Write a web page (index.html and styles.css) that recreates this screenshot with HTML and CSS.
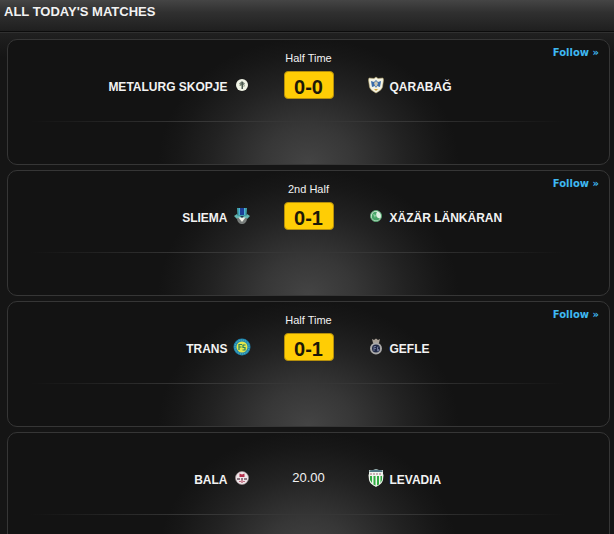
FILE: index.html
```html
<!DOCTYPE html>
<html lang="en">
<head>
    <meta charset="utf-8">
    <title>All Today's Matches</title>
    <link rel="stylesheet" href="styles.css">
</head>
<body>

<div class="header">
    <h1>ALL TODAY'S MATCHES</h1>
</div>

<div class="matches">

    <div class="match">
        <div class="top">
            <span class="status">Half Time</span>
            <a class="follow" href="#">Follow »</a>
        </div>
        <div class="teams">
            <div class="home">
                <span class="name">METALURG SKOPJE</span>
                <svg class="crest" viewBox="0 0 18 18">
                    <circle cx="9" cy="9" r="6" fill="#f1f4e6"/>
                    <path d="M9 5l3 2.500-1.500 2H7.500L6 7.500z" fill="#7b877a"/>
                    <path d="M8.500 6h1.500v7H8.500z" fill="#4c5a50"/>
                    <path d="M6.500 9.500h2M10.500 10.500l1.500-1" stroke="#93a183"/>
                </svg>
            </div>
            <span class="score">0-0</span>
            <div class="away">
                <svg class="crest" viewBox="0 0 18 18">
                    <path d="M9 1l2 1.500 5-.5.500 2-1 7c-.8 3-3.500 4-6.500 6-3-2-5.700-3-6.500-6l-1-7L2 2l5 .5z" fill="#f4f3e4" stroke="#b3a46c" stroke-width=".6"/>
                    <path d="M4 5l3 1 2-2 2 2 3-1-1 6-3-1-1 2-1-2-3 1z" fill="#3a6cab"/>
                    <path d="M7 7l2-2 2 2-1 3H8z" fill="#c9c5b0"/>
                    <path d="M7 13h4l-2 2z" fill="#d5a637"/>
                </svg>
                <span class="name">QARABAĞ</span>
            </div>
        </div>
        <div class="line"></div>
    </div>

    <div class="match">
        <div class="top">
            <span class="status">2nd Half</span>
            <a class="follow" href="#">Follow »</a>
        </div>
        <div class="teams">
            <div class="home">
                <span class="name">SLIEMA</span>
                <svg class="crest" viewBox="0 0 18 18">
                    <path d="M4 1h10l-.5 8h-9z" fill="#3f9fa6"/>
                    <path d="M6 1h6v7H6z" fill="#4fb0dc"/>
                    <path d="M7 1h4v7H7z" fill="#1d3f97"/>
                    <path d="M1 9l3-2 1 2h8l1-2 3 2-3 3H4z" fill="#64b7b2"/>
                    <path d="M4 11h10c0 4-2.500 6-5 6s-5-2-5-6z" fill="#777c7a"/>
                    <path d="M5.500 10.500h7L9 15z" fill="#f0f2e8"/>
                    <path d="M7 9h4l-2 2z" fill="#26324a"/>
                </svg>
            </div>
            <span class="score">0-1</span>
            <div class="away">
                <svg class="crest" viewBox="0 0 18 18">
                    <circle cx="9" cy="9" r="5.500" fill="#dff1e2" stroke="#4fa36b"/>
                    <path d="M10 5a4.300 4.300 0 1 0 3 6c-3 1-5-3-3-6z" fill="#46a567"/>
                    <path d="M6 7l3 1-1 3z" fill="#8bd3a1"/>
                </svg>
                <span class="name">XÄZÄR LÄNKÄRAN</span>
            </div>
        </div>
        <div class="line"></div>
    </div>

    <div class="match">
        <div class="top">
            <span class="status">Half Time</span>
            <a class="follow" href="#">Follow »</a>
        </div>
        <div class="teams">
            <div class="home">
                <span class="name">TRANS</span>
                <svg class="crest" viewBox="0 0 18 18">
                    <circle cx="9" cy="9" r="8.500" fill="#1d86b4"/>
                    <circle cx="9" cy="9" r="7" fill="none" stroke="#6fc1b1" stroke-dasharray="1 1"/>
                    <circle cx="9" cy="9" r="5.500" fill="#e6e74a"/>
                    <path d="M6 12V6.500h3M6 9h2.500M12.500 7H10v2.500h2V12H9.500" fill="none" stroke="#27805f" stroke-width="1.200"/>
                </svg>
            </div>
            <span class="score">0-1</span>
            <div class="away">
                <svg class="crest" viewBox="0 0 18 18">
                    <path d="M5 1l2 1 2-1.500L11 2l2-1-1 4H6z" fill="#aaa197"/>
                    <circle cx="9" cy="10.500" r="5" fill="#202945" stroke="#aaa9a9" stroke-width="2"/>
                    <path d="M7 13V8.500h2M7 10.500h2M11.500 9h-1v4h1v-2" fill="none" stroke="#6c7393"/>
                </svg>
                <span class="name">GEFLE</span>
            </div>
        </div>
        <div class="line"></div>
    </div>

    <div class="match">
        <div class="top"></div>
        <div class="teams">
            <div class="home">
                <span class="name">BALA</span>
                <svg class="crest" viewBox="0 0 18 18">
                    <circle cx="9" cy="9" r="6.500" fill="#eee6e8" stroke="#a9969b" stroke-width=".6"/>
                    <path d="M6.500 4.500l2.500 1 2.500-1V8h-5z" fill="#b52f4c"/>
                    <path d="M4 10h3M8 10h2M11 10h3" stroke="#6c5362" stroke-width="1.500"/>
                    <path d="M6 12.500h2M10 12.500h2" stroke="#c26b81"/>
                    <path d="M8.500 11h1v3h-1z" fill="#a5324c"/>
                </svg>
            </div>
            <span class="time">20.00</span>
            <div class="away">
                <svg class="crest" viewBox="0 0 18 18">
                    <path d="M2 1l3 .5L9 0l4 1.500L16 1v4l.5 1-.5 5c-1 4-4 5-7 7-3-2-6-3-7-7l-.5-5L2 5z" fill="#eef5ec"/>
                    <path d="M2.500 1.500L9 .500l6.500 1V3h-13z" fill="#4e7783"/>
                    <path d="M3 5h12" stroke="#a56d7e" stroke-dasharray="2 1"/>
                    <path d="M3 7h2v7l-2-3zM6.500 7h2v9.500l-2-1zM10 7h2v8.500l-2 1zM13.500 7H15v4l-1.500 3z" fill="#2faa40"/>
                </svg>
                <span class="name">LEVADIA</span>
            </div>
        </div>
        <div class="line"></div>
    </div>

</div>

</body>
</html>
```

FILE: styles.css
```css
* {
    box-sizing: border-box;
}

html {
    height: 100%;
    overflow: hidden;
    background: #151515;
}

body {
    height: 100%;
    margin: 0;
    overflow: hidden;
    color: #f2f2f2;
    font-family: "Liberation Sans", Arial, Helvetica, sans-serif;
}

.header {
    height: 32px;
    padding: 4px;
    background: linear-gradient(#454545, #303030 40%, #1f1f1f);
    border-bottom: 1px solid #0c0c0c;
}

h1 {
    margin: 0;
    font-size: 13px;
    line-height: 16px;
}

.matches {
    padding: 6px 4px 0 7px;
    border-top: 1px solid #303030;
    background: linear-gradient(#202020, #151515 24px);
}

.match {
    height: 126px;
    margin-bottom: 5px;
    border: 1px solid #363636;
    border-radius: 10px;
    background: radial-gradient(150px 126px at 50% 100%, #444, #373737 30%, #222 65%, #171717 88%, #131313) #131313;
}

/* three columns, the score stays in the middle */
.top, .teams {
    display: grid;
    grid-template-columns: 1fr 50px 1fr;
    column-gap: 33px;
}

.top {
    height: 31px;
    padding: 5px 10px 0;
    line-height: 14px;
}

.status {
    grid-column: 2;
    margin-top: 6px;
    font-size: 11px;
    text-align: center;
    white-space: nowrap;
}

.follow {
    grid-column: 3;
    justify-self: end;
    color: #3fb9f2;
    font-family: "DejaVu Sans", Verdana, sans-serif;
    font-size: 10px;
    font-weight: bold;
    line-height: 16px;
    text-decoration: none;
}

.follow:hover {
    text-decoration: underline;
}

.teams {
    height: 28px;
    align-items: center;
}

.home, .away {
    display: flex;
    align-items: center;
    gap: 5px;
}

.home {
    justify-content: flex-end;
}

.name {
    padding-top: 3px;
    font-size: 12px;
    font-weight: bold;
    line-height: 16px;
}

.crest {
    width: 18px;
    height: 18px;
}

.score {
    height: 28px;
    border: 1px solid #b48e0c;
    border-radius: 4px;
    background: #ffcd05;
    color: #1c1808;
    font-size: 20px;
    font-weight: bold;
    line-height: 30px;
    text-align: center;
}

.time {
    font-size: 13px;
    line-height: 16px;
    text-align: center;
}

.line {
    height: 2px;
    margin: 22px 44px 0 22px;
    background: linear-gradient(90deg, transparent, #363636 30%, #363636 70%, transparent) 0 0 / 100% 1px no-repeat;
}
```
